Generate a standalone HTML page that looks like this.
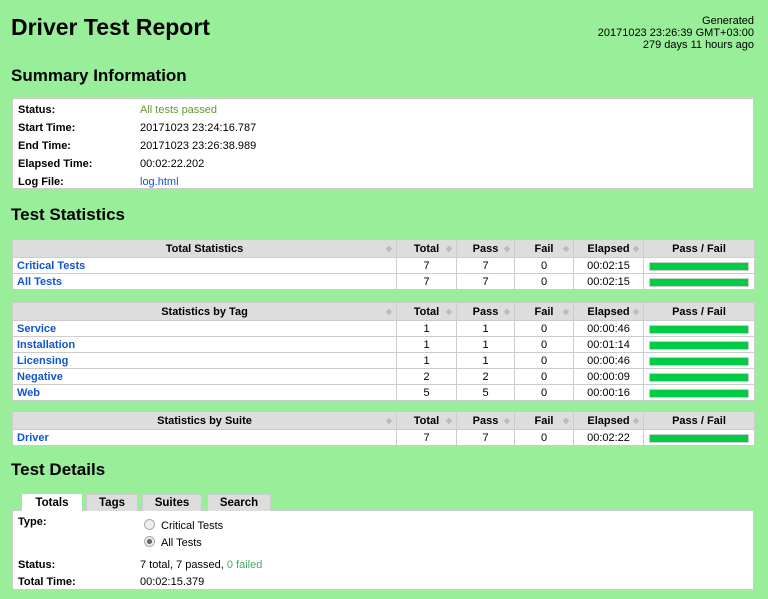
<!DOCTYPE html>
<html><head><style>
body{margin:0;width:768px;height:599px;background:#99ee99;font-family:"Liberation Sans",Arial,sans-serif;font-size:11px;color:#000;position:relative;overflow:hidden}
.a{position:absolute}
h1{position:absolute;margin:0;left:11px;top:14px;font-size:23px;font-weight:bold}
h2{position:absolute;margin:0;left:11px;font-size:17px;font-weight:bold}
.gen{right:14px;top:15px;text-align:right;font-size:11px;line-height:12px}
.box{background:#fff;border:1px solid #ccc;box-sizing:border-box}
table{position:absolute;left:12px;width:742px;border-collapse:collapse;background:#fff;table-layout:fixed}
td,th{border:1px solid #ccc;padding:2px 4px 0;font-size:11px;height:12.7px;line-height:13px;text-align:center;vertical-align:middle;white-space:nowrap}
th{background:#ddd;height:15px;font-weight:bold;position:relative}
td.n{text-align:left;font-weight:bold;color:#15c}
a{color:#15c;text-decoration:none}
.bar{height:7px;background:#0c4;border:1px solid #ccc;margin:0 1px}
.s{color:#bbb;font-size:8px;position:absolute;right:4px;top:5px;line-height:8px}
.lbl{font-weight:bold}
.tab{position:absolute;top:494px;height:16px;background:#ddd;border:1px solid #ccc;border-bottom:none;font-weight:bold;text-align:center;line-height:16px;font-size:11.5px}
.radio{display:inline-block;width:9px;height:9px;border:1px solid #aaa;border-radius:50%;background:#eee;vertical-align:-1px;margin-right:6px;position:relative}
</style></head><body>
<h1>Driver Test Report</h1>
<div class="a gen">Generated<br>20171023 23:26:39 GMT+03:00<br>279 days 11 hours ago</div>
<h2 style="top:66px">Summary Information</h2>
<div class="a box" style="left:12px;top:98px;width:742px;height:91px"></div>
<div class="a lbl" style="left:18px;top:101px;line-height:18px">Status:<br>Start Time:<br>End Time:<br>Elapsed Time:<br>Log File:</div>
<div class="a" style="left:140px;top:101px;line-height:18px"><span style="color:#693">All tests passed</span><br>20171023 23:24:16.787<br>20171023 23:26:38.989<br>00:02:22.202<br><a>log.html</a></div>
<h2 style="top:205px">Test Statistics</h2>
<table style="top:239px">
<colgroup><col style="width:384px"><col style="width:60px"><col style="width:58px"><col style="width:59px"><col style="width:70px"><col style="width:111px"></colgroup>
<tr><th>Total Statistics<span class="s">◆</span></th><th>Total <span class="s">◆</span></th><th>Pass <span class="s">◆</span></th><th>Fail <span class="s">◆</span></th><th>Elapsed<span class="s">◆</span></th><th>Pass / Fail</th></tr>
<tr><td class="n">Critical Tests</td><td>7</td><td>7</td><td>0</td><td>00:02:15</td><td><div class="bar"></div></td></tr>
<tr><td class="n">All Tests</td><td>7</td><td>7</td><td>0</td><td>00:02:15</td><td><div class="bar"></div></td></tr>
</table>
<table style="top:302px">
<colgroup><col style="width:384px"><col style="width:60px"><col style="width:58px"><col style="width:59px"><col style="width:70px"><col style="width:111px"></colgroup>
<tr><th>Statistics by Tag<span class="s">◆</span></th><th>Total <span class="s">◆</span></th><th>Pass <span class="s">◆</span></th><th>Fail <span class="s">◆</span></th><th>Elapsed<span class="s">◆</span></th><th>Pass / Fail</th></tr>
<tr><td class="n">Service</td><td>1</td><td>1</td><td>0</td><td>00:00:46</td><td><div class="bar"></div></td></tr>
<tr><td class="n">Installation</td><td>1</td><td>1</td><td>0</td><td>00:01:14</td><td><div class="bar"></div></td></tr>
<tr><td class="n">Licensing</td><td>1</td><td>1</td><td>0</td><td>00:00:46</td><td><div class="bar"></div></td></tr>
<tr><td class="n">Negative</td><td>2</td><td>2</td><td>0</td><td>00:00:09</td><td><div class="bar"></div></td></tr>
<tr><td class="n">Web</td><td>5</td><td>5</td><td>0</td><td>00:00:16</td><td><div class="bar"></div></td></tr>
</table>
<table style="top:411px">
<colgroup><col style="width:384px"><col style="width:60px"><col style="width:58px"><col style="width:59px"><col style="width:70px"><col style="width:111px"></colgroup>
<tr><th>Statistics by Suite<span class="s">◆</span></th><th>Total <span class="s">◆</span></th><th>Pass <span class="s">◆</span></th><th>Fail <span class="s">◆</span></th><th>Elapsed<span class="s">◆</span></th><th>Pass / Fail</th></tr>
<tr><td class="n">Driver</td><td>7</td><td>7</td><td>0</td><td>00:02:22</td><td><div class="bar"></div></td></tr>
</table>
<h2 style="top:460px">Test Details</h2>
<div class="a box" style="left:12px;top:510px;width:742px;height:80px"></div>
<div class="tab" style="left:22px;width:58px;background:#fff;height:17px;border-color:#fff">Totals</div>
<div class="tab" style="left:86px;width:50px">Tags</div>
<div class="tab" style="left:142px;width:58px">Suites</div>
<div class="tab" style="left:207px;width:62px">Search</div>
<div class="a lbl" style="left:18px;top:516px">Type:</div>
<div class="a" style="left:144px;top:518px;line-height:17px"><span class="radio"></span>Critical Tests<br><span class="radio" style="background:radial-gradient(#666 35%,#eee 45%)"></span>All Tests</div>
<div class="a lbl" style="left:18px;top:557px;line-height:17px">Status:<br>Total Time:</div>
<div class="a" style="left:140px;top:557px;line-height:17px">7 total, 7 passed, <span style="color:#4a6">0 failed</span><br>00:02:15.379</div>
</body></html>
